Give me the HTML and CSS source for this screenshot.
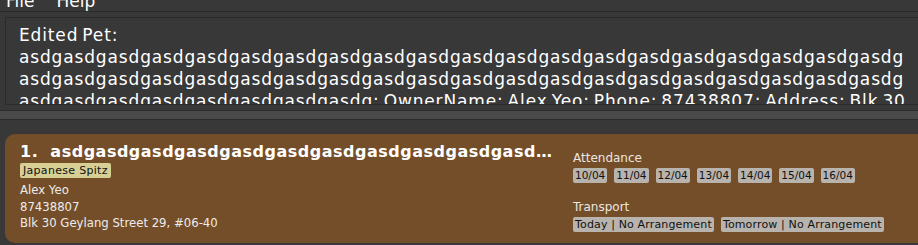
FILE: index.html
```html
<!DOCTYPE html>
<html>
<head>
<meta charset="utf-8">
<link rel="stylesheet" href="styles.css">
</head>
<body>
<div class="menubar">
  <span class="menu-item">File</span>
  <span class="menu-item">Help</span>
</div>
<div class="result-pane">
  <div class="result-box">
    <div class="result-text">Edited Pet:<br>asdgasdgasdgasdgasdgasdgasdgasdgasdgasdgasdgasdgasdgasdgasdgasdgasdgasdgasdgasdg<br>asdgasdgasdgasdgasdgasdgasdgasdgasdgasdgasdgasdgasdgasdgasdgasdgasdgasdgasdgasdg<br>asdgasdgasdgasdgasdgasdgasdgasdg; OwnerName: Alex Yeo; Phone: 87438807; Address: Blk 30</div>
  </div>
</div>
<div class="divider"></div>
<div class="list-pane">
  <div class="card">
    <div class="card-left">
      <div class="pet-name">1.&nbsp;&nbsp;asdgasdgasdgasdgasdgasdgasdgasdgasdgasdgasdgasdgasdgasdgasdgasdgasdgasdgasdgasdg</div>
      <div class="tag-row"><span class="tag breed">Japanese Spitz</span></div>
      <div class="info">Alex Yeo</div>
      <div class="info">87438807</div>
      <div class="info">Blk 30 Geylang Street 29, #06-40</div>
    </div>
    <div class="card-right">
      <div class="label">Attendance</div>
      <div class="tags dates">
        <span class="tag">10/04</span>
        <span class="tag">11/04</span>
        <span class="tag">12/04</span>
        <span class="tag">13/04</span>
        <span class="tag">14/04</span>
        <span class="tag">15/04</span>
        <span class="tag">16/04</span>
      </div>
      <div class="label transport">Transport</div>
      <div class="tags">
        <span class="tag">Today | No Arrangement</span>
        <span class="tag">Tomorrow | No Arrangement</span>
      </div>
    </div>
  </div>
</div>
</body>
</html>
```
FILE: styles.css
```css
html, body {
  margin: 0;
  padding: 0;
  background: #383838;
  overflow: hidden;
  font-family: "DejaVu Sans", "Liberation Sans", sans-serif;
  color: #ffffff;
}

.menubar {
  height: 11px;
  border-bottom: 1px solid #2a2a2a;
  overflow: hidden;
  display: flex;
  gap: 22px;
  padding-left: 6px;
}

.menu-item {
  font-size: 17px;
  line-height: 17px;
  margin-top: -7px;
  color: #ffffff;
}

.result-pane {
  padding: 5px 0 5px 5px;
}

.result-box {
  height: 86px;
  border: 1px solid #2b2b2b;
  border-right: none;
  overflow: hidden;
  padding: 0 0 0 13px;
}

.result-text {
  font-size: 17px;
  letter-spacing: 0.85px;
  word-spacing: -2.2px;
  line-height: 22px;
  white-space: nowrap;
  margin-top: 6px;
}

.divider {
  height: 8px;
  background: #4a4a4a;
  border-top: 1px solid #2c2c2c;
  border-bottom: 1px solid #2c2c2c;
}

.list-pane {
  padding: 14px 0 0 5px;
}

.card {
  width: 940px;
  height: 109px;
  background: #744e28;
  border-radius: 10px;
  display: flex;
  padding-left: 15px;
  box-sizing: border-box;
}

.card-left {
  width: 536px;
  margin-right: 17px;
  padding-top: 8px;
  display: flex;
  flex-direction: column;
}

.pet-name {
  font-weight: bold;
  font-size: 16px;
  letter-spacing: 0.5px;
  line-height: 20px;
  white-space: nowrap;
  overflow: hidden;
  text-overflow: ellipsis;
}

.tag-row {
  display: flex;
  margin-top: 1px;
}

.tag {
  display: inline-block;
  background: #b8b3ad;
  color: #111111;
  font-size: 11px;
  letter-spacing: 0.15px;
  line-height: 15px;
  height: 15px;
  padding: 0 2px;
  border-radius: 2px;
  white-space: nowrap;
}

.tag.breed {
  background: #d8cf95;
  padding: 0 3px;
  letter-spacing: 0.3px;
}

.info {
  font-size: 11.7px;
  line-height: 16.7px;
  color: #ececec;
  white-space: nowrap;
}

.tag-row + .info {
  margin-top: 4px;
}

.card-right {
  padding-top: 16px;
  display: flex;
  flex-direction: column;
}

.label {
  font-size: 12px;
  line-height: 16px;
  color: #ebe6e0;
}

.label.transport {
  margin-top: 16px;
}

.tags {
  display: flex;
  gap: 7px;
  margin-top: 2px;
}

.tags.dates .tag {
  font-size: 10.5px;
  letter-spacing: 0;
}
```
